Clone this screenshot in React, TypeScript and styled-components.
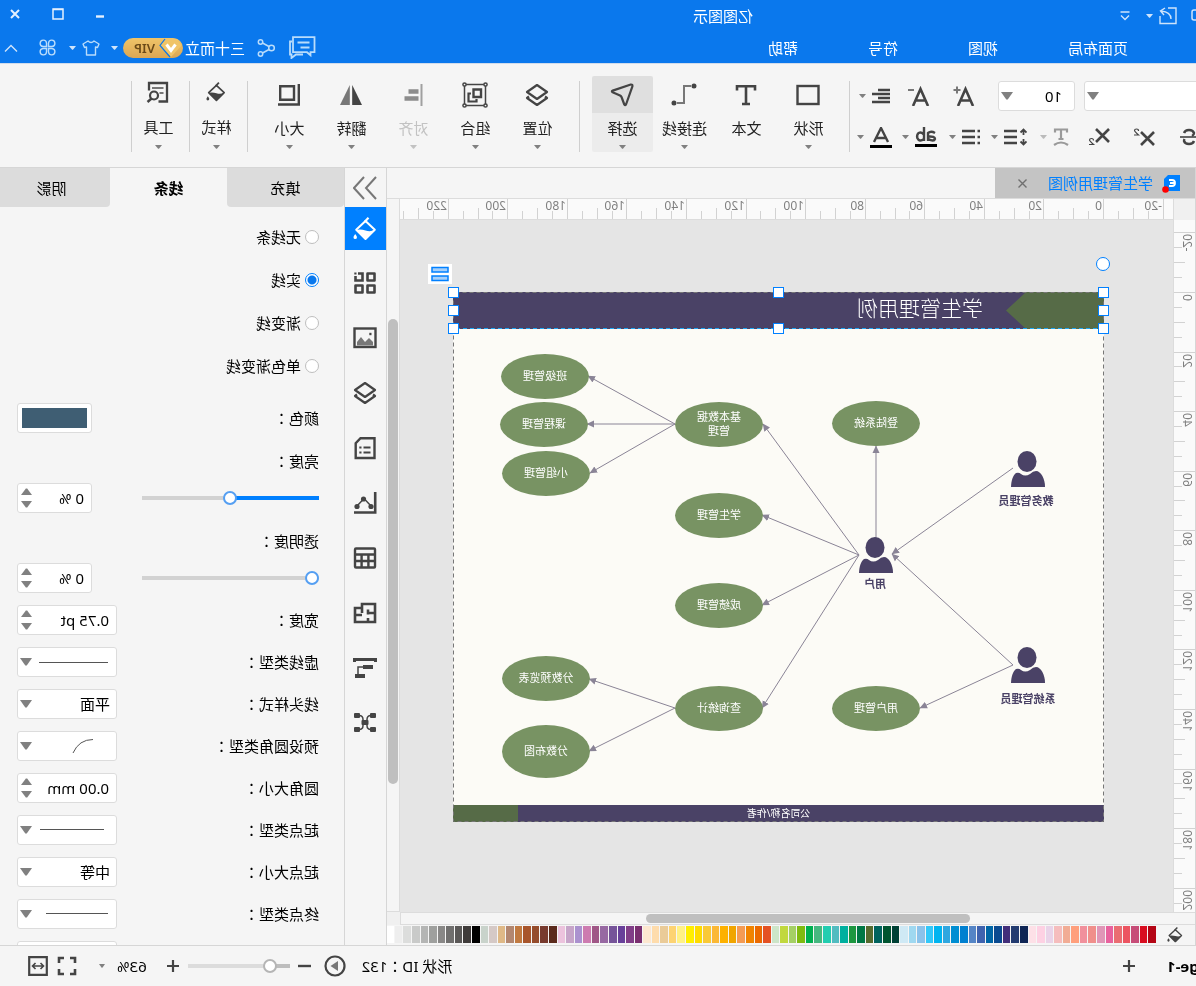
import React, { useState } from "react";
import styled, { createGlobalStyle } from "styled-components";

const ink = "#444444";
const line = "#d6d6d6";
const blue = "#0080ff";
const violet = "#4a4266";
const moss = "#566b47";

const GlobalStyle = createGlobalStyle`
  * { box-sizing: border-box; }
  body {
    margin: 0;
    overflow: hidden;
    background: #f5f5f5;
    color: #000;
    font: 15px/20px "Noto Sans", "Noto Sans CJK SC", sans-serif;
  }
  button, input, select { font: inherit; color: inherit; }
  button { padding: 0; border: 0; background: none; }
  svg { display: block; flex: none; }
`;

/* The whole window is shown as in a mirror. */
const Window = styled.div`
  display: flex;
  flex-direction: column;
  height: 100vh;
  overflow: hidden;
  transform: scaleX(-1);
`;

/* ---------- title bar ---------- */

const Header = styled.header`
  flex: none;
  color: #fff;
  background: #0a78ed;
  border-bottom: 1px solid #d0dcec;
`;

const TitleRow = styled.div`
  display: grid;
  grid-template-columns: 443px 1fr auto;
  align-items: center;
  height: 32px;
`;

const QuickAccess = styled.div`
  display: flex;
  align-items: center;
`;

const HeaderButton = styled.button<{ $before?: number }>`
  display: flex;
  align-items: center;
  margin-left: ${(p) => p.$before ?? 0}px;
`;

const WindowButtons = styled.div`
  display: flex;
  align-items: center;
  gap: 31px;
  height: 28px;
  padding-right: 9px;
  align-self: start;
`;

const MenuRow = styled.div`
  display: flex;
  align-items: center;
  justify-content: space-between;
  height: 31px;
  padding: 0 4px 0 68px;
`;

const Menu = styled.nav`
  display: flex;
  gap: 70px;
`;

const Account = styled.div`
  display: flex;
  align-items: center;
`;

const UserName = styled.span`
  margin: 0 2px 0 12px;
`;

const VipBadge = styled.span`
  display: flex;
  align-items: center;
  width: 60px;
  height: 20px;
  gap: 4px;
  border-radius: 10px;
  background: linear-gradient(#f0c468, #dba654);
  color: #6b4a17;
  font-size: 13px;
  font-weight: 600;
  line-height: 20px;
`;

/* ---------- ribbon ---------- */

const Ribbon = styled.section`
  display: flex;
  flex: none;
  height: 104px;
  padding-top: 12px;
  border-bottom: 1px solid ${line};
`;

const FontGroup = styled.div`
  flex: none;
  width: 346px;
  padding: 5px 2px 0 0;
`;

const FontRow = styled.div`
  display: flex;
  align-items: center;
  justify-content: flex-end;
  height: 30px;
  & + & { margin-top: 12px; height: 28px; }
`;

const Selectors = styled.div`
  display: flex;
  flex: none;
  gap: 9px;
  margin-right: 11px;
`;

const Slot = styled.button`
  display: flex;
  flex: none;
  align-items: center;
  justify-content: center;
  gap: 6px;
  width: 45px;
  height: 28px;
`;

const Divider = styled.span<{ $left?: number; $right?: number }>`
  flex: none;
  width: 1px;
  height: 71px;
  margin: 5px ${(p) => p.$right ?? 0}px 0 ${(p) => p.$left ?? 0}px;
  background: #cfcfcf;
`;

const Tools = styled.div`
  display: flex;
  gap: 1px;
`;

const Tool = styled.button<{ $active?: boolean; $low?: boolean }>`
  display: grid;
  grid-template-rows: ${(p) => (p.$low ? "32px 38px 2px 4px" : "37px 29px 10px")};
  justify-items: center;
  align-items: center;
  width: ${(p) => (p.$low ? 57 : 61)}px;
  height: 76px;
  padding-left: ${(p) => (p.$low ? 4 : 0)}px;
  border-radius: 2px;
  background: ${(p) =>
    p.$active ? "linear-gradient(#dfdfdf 37px, #ececec 37px)" : "none"};
  color: #222;
  white-space: nowrap;
  &:disabled { color: #c2c2c2; }
`;

/* ---------- form parts ---------- */

const Field = styled.span<{ $w?: number }>`
  position: relative;
  display: flex;
  flex: none;
  width: ${(p) => p.$w ?? 100}px;
  height: 30px;
  border: 1px solid #dcdcdc;
  border-radius: 3px;
  background: #fff;
`;

const NativeSelect = styled.select<{ $pad?: number }>`
  width: 100%;
  height: 100%;
  padding: 0 24px 0 ${(p) => p.$pad ?? 6}px;
  border: 0;
  background: none;
  appearance: none;
  outline: 0;
`;

const FieldMark = styled.span`
  position: absolute;
  top: 10px;
  right: 2px;
  pointer-events: none;
`;

const Preview = styled.svg`
  position: absolute;
  inset: 0;
  pointer-events: none;
`;

const SpinInput = styled.input`
  flex: 1;
  min-width: 0;
  padding: 0 0 0 7px;
  border: 0;
  background: none;
  outline: 0;
`;

const SpinButtons = styled.span`
  display: flex;
  flex-direction: column;
  justify-content: center;
  gap: 6px;
  padding-right: 3px;
`;

/* ---------- workspace ---------- */

const Body = styled.div`
  display: flex;
  flex: 1;
  min-height: 0;
`;

const Workspace = styled.main`
  display: grid;
  grid-template: 30px 22px 1fr 13px 20px / 22px 1fr 13px;
  flex: 1;
  min-width: 0;
  border-left: 1px solid ${line};
  border-right: 1px solid ${line};
`;

const DocTabs = styled.div`
  grid-column: 1 / -1;
  display: flex;
`;

const DocTab = styled.div`
  display: flex;
  align-items: center;
  width: 200px;
  padding-left: 15px;
  background: #c4c4c4;
  color: ${blue};
`;

const DocName = styled.span`
  margin: 0 21px 0 9px;
`;

const RulerCorner = styled.div`
  border: solid #dcdcdc;
  border-width: 1px 1px 0 0;
  background: #f0f0f0;
`;

const RulerTop = styled.div`
  position: relative;
  overflow: hidden;
  border: solid #dcdcdc;
  border-width: 1px 0;
  background: #fafafa;
`;

const RulerLeft = styled.div`
  position: relative;
  overflow: hidden;
  border-right: 1px solid #dcdcdc;
  background: #fafafa;
`;

const TickX = styled.i<{ $len: number }>`
  position: absolute;
  bottom: 0;
  width: 1px;
  height: ${(p) => p.$len}px;
  background: #d2d2d2;
`;

const TickY = styled.i<{ $len: number }>`
  position: absolute;
  right: 0;
  width: ${(p) => p.$len}px;
  height: 1px;
  background: #d2d2d2;
`;

const LabelX = styled.span`
  position: absolute;
  top: 0;
  color: #808080;
  font-size: 12px;
  line-height: 14px;
`;

const LabelY = styled.span`
  position: absolute;
  left: 1px;
  color: #808080;
  font-size: 12px;
  line-height: 14px;
  writing-mode: vertical-rl;
  transform: rotate(180deg);
`;

const ScrollY = styled.div`
  grid-row: 2 / 4;
  grid-column: 3;
  padding: 120px 1px 127px;
  border: solid #dcdcdc;
  border-width: 1px 0 1px 1px;
`;

const ThumbY = styled.div`
  height: 100%;
  border-radius: 5px;
  background: #bfbfbf;
`;

const ScrollX = styled.div`
  grid-row: 4;
  grid-column: 1 / 3;
  padding: 1px 1px 1px 225px;
  border: solid #dcdcdc;
  border-width: 1px 1px 1px 0;
`;

const ThumbX = styled.div`
  width: 57%;
  height: 9px;
  border-radius: 5px;
  background: #bfbfbf;
`;

const ScrollCorner = styled.div`
  background: #f0f0f0;
`;

const Palette = styled.div`
  grid-column: 1 / -1;
  display: flex;
  overflow: hidden;
  padding: 1px 0 2px 12px;
`;

const Swatches = styled.div`
  display: flex;
  flex: 1;
  margin: 0 -2px 0 11px;
`;

const Swatch = styled.button<{ $c: string }>`
  flex: 1;
  margin-right: 1px;
  background: ${(p) => p.$c};
`;

/* ---------- diagram ---------- */

const Stage = styled.div`
  position: relative;
  overflow: hidden;
  background: #e5e5e5;
`;

const Page = styled.div`
  position: absolute;
  left: 69px;
  top: 72px;
  width: 651px;
  height: 530px;
  background: #fcfbf6;
`;

const Drawing = styled.svg`
  position: absolute;
  inset: 0;
  overflow: visible;
`;

const Bubble = styled.div<{ $x: number; $y: number; $h?: number }>`
  position: absolute;
  left: ${(p) => p.$x - 44}px;
  top: ${(p) => p.$y - Math.floor((p.$h ?? 45) / 2)}px;
  display: flex;
  align-items: center;
  justify-content: center;
  width: 88px;
  height: ${(p) => p.$h ?? 45}px;
  padding-bottom: 2px;
  border-radius: 50%;
  background: #789363;
  color: #fff;
  font-size: 11px;
  line-height: 14px;
  text-align: center;
  white-space: pre-line;
`;

const ActorLabel = styled.div<{ $x: number; $y: number }>`
  position: absolute;
  left: ${(p) => p.$x - 40}px;
  top: ${(p) => p.$y - 8}px;
  width: 80px;
  color: ${violet};
  font-size: 11px;
  font-weight: 700;
  line-height: 16px;
  text-align: center;
`;

const Banner = styled.h1`
  position: absolute;
  left: 121px;
  top: 1px;
  margin: 0;
  color: #fff;
  font-size: 21px;
  font-weight: 300;
  line-height: 30px;
`;

const Footnote = styled.div`
  position: absolute;
  left: 0;
  right: 0;
  bottom: 1px;
  color: #fff;
  font-size: 10px;
  line-height: 16px;
  text-align: center;
`;

const Handle = styled.i<{ $x: number; $y: number }>`
  position: absolute;
  left: ${(p) => p.$x - 5}px;
  top: ${(p) => p.$y - 5}px;
  width: 11px;
  height: 11px;
  border: 1px solid ${blue};
  background: #fff;
`;

const RotateHandle = styled(Handle)`
  width: 14px;
  height: 14px;
  border-radius: 50%;
`;

const FloatButton = styled.button`
  position: absolute;
  left: 652px;
  top: -28px;
  display: flex;
  align-items: center;
  justify-content: center;
  width: 24px;
  height: 20px;
  background: #fff;
`;

/* ---------- side panel ---------- */

const IconBar = styled.nav`
  display: flex;
  flex: none;
  flex-direction: column;
  width: 41px;
`;

const BarGroup = styled.div`
  display: flex;
  flex-direction: column;
  padding-top: 5px;
`;

const BarButton = styled.button<{ $active?: boolean; $h?: number }>`
  display: flex;
  flex: none;
  align-items: center;
  justify-content: center;
  height: ${(p) => p.$h ?? 55}px;
  background: ${(p) => (p.$active ? blue : "none")};
  color: ${(p) => (p.$active ? "#fff" : ink)};
`;

const Panel = styled.aside`
  flex: none;
  width: 345px;
  overflow: hidden;
  border-left: 1px solid ${line};
`;

const Tabs = styled.div`
  display: flex;
  height: 39px;
`;

const Tab = styled.button<{ $active?: boolean }>`
  flex: none;
  width: 117px;
  border-radius: 0 0 4px 4px;
  background: ${(p) => (p.$active ? "none" : "#dcdcdc")};
  font-weight: ${(p) => (p.$active ? 700 : 400)};
`;

const Form = styled.form`
  padding: 8px 17px 0 25px;
`;

const RadioRow = styled.label`
  display: flex;
  align-items: center;
  gap: 4px;
  height: 43px;
`;

const Radio = styled.input`
  width: 14px;
  height: 14px;
  margin: 0;
  border: 1px solid #bdbdbd;
  border-radius: 50%;
  background: #fff;
  appearance: none;
  &:checked {
    border-color: ${blue};
    background: radial-gradient(circle, #0a78ed 4px, #fff 5px);
  }
`;

const Row = styled.div<{ $h?: number; $before?: number }>`
  display: flex;
  align-items: center;
  justify-content: space-between;
  height: ${(p) => p.$h ?? 42}px;
  margin-top: ${(p) => p.$before ?? 0}px;
`;

/* This face centres the full-width colon in its cell. */
const Colon = styled.span`
  font-family: "Noto Sans CJK TC", sans-serif;
  line-height: 1;
`;

const ColorButton = styled.button`
  width: 75px;
  height: 30px;
  padding: 4px;
  border: 1px solid #dcdcdc;
  border-radius: 3px;
  background: #3f5e73 content-box;
  box-shadow: inset 0 0 0 4px #fff;
`;

const Range = styled.input<{ $fill: number; $on: string; $off: string }>`
  flex: 1;
  min-width: 0;
  height: 14px;
  margin: 0 50px 0 0;
  border-radius: 2px;
  background: linear-gradient(90deg, ${(p) => p.$on} ${(p) => p.$fill}%, ${(p) => p.$off} ${(p) => p.$fill}%)
    center / 100% 4px no-repeat;
  appearance: none;
  &::-webkit-slider-thumb {
    width: 14px;
    height: 14px;
    border: 2px solid #559ff2;
    border-radius: 50%;
    background: #fff;
    appearance: none;
  }
`;

/* ---------- status bar ---------- */

const StatusBar = styled.footer`
  display: flex;
  flex: none;
  align-items: center;
  justify-content: space-between;
  height: 41px;
  padding-right: 28px;
  border-top: 1px solid ${line};
`;

const StatusGroup = styled.div`
  display: flex;
  align-items: center;
`;

const PageName = styled.button`
  width: 29px;
  margin-right: 32px;
  overflow: hidden;
  direction: rtl;
  font-weight: 700;
  white-space: nowrap;
`;

const StatusButton = styled.button<{ $before?: number }>`
  margin-left: ${(p) => p.$before ?? 0}px;
`;

const ZoomRange = styled(Range)`
  flex: none;
  width: 102px;
  margin: 0 9px 0 8px;
  &::-webkit-slider-thumb { border-color: #b5b5b5; }
`;

const ZoomValue = styled.span`
  margin: 0 12px 0 20px;
`;

/* ---------- icons ---------- */

type IconProps = { w?: number; h?: number; vb?: string; sw?: number; color?: string; children: React.ReactNode };
const Icon = ({ w = 24, h = 24, vb, sw = 2, color = ink, children }: IconProps) => (
  <svg width={w} height={h} viewBox={vb ?? `0 0 ${w} ${h}`} fill="none" stroke={color} strokeWidth={sw} aria-hidden="true">
    {children}
  </svg>
);

const Caret = ({ w = 7, h = 4, color = "#808080", up = false }: { w?: number; h?: number; color?: string; up?: boolean }) => (
  <svg width={w} height={h} viewBox="0 0 10 6" preserveAspectRatio="none" fill={color} aria-hidden="true">
    <path d={up ? "M0 6h10L5.600 .4h-1.200z" : "M0 0h10L5.600 5.600h-1.200z"} />
  </svg>
);

const LayersIcon = () => (
  <Icon sw={2.2}><path d="M12 2 22 9 12 16 2 9Z" strokeLinejoin="round" /><path d="M4 13.500 2 15l10 7 10-7-2-1.500" strokeLinejoin="round" /></Icon>
);

const BucketIcon = ({ color = ink, size = 24 }: { color?: string; size?: number }) => (
  <Icon w={size} h={size} vb="0 0 24 24" color={color}>
    <path d="M8.500 .8 12.500 5" strokeWidth="2.200" />
    <path d="M11.500 4 2.200 12.800 11.500 22 20.800 12.800Z" strokeWidth="2" strokeLinejoin="round" />
    <path d="M2.200 13q4.500 2 9.300.5t9.300-.5L11.500 22.500Z" fill={color} stroke="none" />
    <path d="M21.800 17c1.300 1.800 1.700 2.500 1.700 3.400a1.700 1.700 0 0 1-3.400 0c0-.9.400-1.600 1.700-3.400Z" fill={color} stroke="none" />
  </Icon>
);

const tools = {
  shape: <Icon sw={2.4}><rect x="1.500" y="3" width="21" height="18" /></Icon>,
  text: <Icon sw={2.6}><path d="M3 7.500V3.300h18v4.200M12 3v18M8 21h8" /></Icon>,
  connector: <Icon w={26}><path d="M6 3h7v17h7" stroke="#777" /><circle cx="3" cy="3" r="2.500" fill={ink} stroke="none" /><circle cx="23" cy="20" r="2.500" fill={ink} stroke="none" /></Icon>,
  select: <Icon sw={2.200}><path d="M3.200 1.500 21.300 7.600q1.600.7.100 1.700L14 12.500q-1 .6-1.500 1.500L9.700 21.500q-.8 1.500-1.700 0L1.600 3.300q-.3-2 1.600-1.800Z" strokeLinejoin="round" /></Icon>,
  group: (
    <Icon w={26} h={26} sw={1.500}>
      <rect x="2.500" y="2.500" width="21" height="21" />
      <g fill="#f5f5f5">{[2.500, 23.500].map((x) => [2.500, 23.500].map((y) => <circle key={`${x}${y}`} cx={x} cy={y} r="1.600" />))}</g>
      <path d="M7 7.500h7.500v7.500H7z" strokeWidth="2.400" />
      <path d="M17 11.500h2.500v8h-8V17" strokeWidth="2.200" />
    </Icon>
  ),
  align: <Icon w={20} color="#a0a0a0"><path d="M1.500 1v22" /><path d="M4.500 8.500h10M4.500 15.500h14" stroke="#8c8c8c" strokeWidth="4.500" /></Icon>,
  flip: <Icon><path d="M1 22h9.800V2z" fill={ink} stroke="none" /><path d="M23 22h-9.800V2z" fill="#777" stroke="none" /></Icon>,
  size: <Icon sw={2.400}><path d="M7 3.200h13.800v13.600H7zM2.200 1v20.500H23" /></Icon>,
  utility: (
    <Icon>
      <path d="M11.500 21.500H3V3h18v7.500" strokeWidth="2.300" /><path d="M6.500 8h11.500M6.500 13h4" stroke="#777" />
      <circle cx="16" cy="15.500" r="4" strokeWidth="2.200" /><path d="m18.500 18.500 4 3.500" strokeWidth="2.400" />
    </Icon>
  ),
};

const barIcons: [string, React.ReactNode][] = [
  ["布局", <Icon key="g" sw={2.600}><path d="M2.500 2.500h7v7h-7zM2.500 14.500h7v7h-7zM14.500 14.500h7v7h-7z" strokeLinejoin="round" /><path d="M21.500 5v4.500h-7v-7h4.500" /><path d="M20.500 2.500h2.200" strokeWidth="2" /></Icon>],
  ["图片", <Icon key="i" sw={2.400}><rect x="1.500" y="2.500" width="21" height="18.500" /><path d="M4 19.500v-3.500l4-4 4 4 4-5 4 5v3.500z" fill="#777" stroke="none" /><path d="M5.500 8h2.200" /></Icon>],
  ["图层", <LayersIcon key="l" />],
  ["页面", <Icon key="p" sw={2.400}><path d="M2.500 2.200h14l4.800 5v14.800H2.500z" /><path d="M6.500 11.500h7M15.500 11.500h2.200M6.500 16.500h7M15.500 16.500h2.200" strokeWidth="2" /></Icon>],
  ["图表", <Icon key="c" sw={2.200}><path d="M1.800 1v20.500H23" strokeWidth="2.600" /><path d="m6 15 7-7.500 7 7.500" strokeWidth="1.500" /><g fill={ink} stroke="none"><circle cx="6" cy="15.500" r="2.600" /><circle cx="13.500" cy="8" r="2.600" /><circle cx="20" cy="15.500" r="2.600" /></g></Icon>],
  ["表格", <Icon key="t" sw={2.400}><rect x="2" y="2.500" width="20" height="19" rx="1" /><path d="M2 8.500h20M2 15h20M8.600 9v12M15.400 9v12" /></Icon>],
  ["平面图", <Icon key="f" sw={2.600}><path d="M2 3h13v4h7v14H2zM2 12h7M9 8.500v5M9 17v4M15 7v5M15 14h7" /></Icon>],
  ["甘特图", <Icon key="n" sw={2}><path d="M1.500 6V3.500h21V6" strokeWidth="3" /><path d="M4 11h10M12 20h10" strokeWidth="4" /><path d="M12 11h7v8" strokeWidth="1.500" /></Icon>],
  ["导图", <Icon key="m" sw={2}><g fill={ink} stroke="none"><rect x="1" y="2" width="6" height="5" rx="1" /><rect x="17" y="2" width="6" height="5" rx="1" /><rect x="1" y="16" width="6" height="5" rx="1" /><rect x="17" y="16" width="6" height="5" rx="1" /><rect x="8.500" y="9" width="7" height="5" rx="1" /></g><path d="M6 4.500q4 0 4 4v6q0 4-4 4M18 4.500q-4 0-4 4v6q0 4 4 4" strokeWidth="1.500" /></Icon>],
];

const A = "M2 20 9.500 3 17 20M5 14.500h9";

/* ---------- data ---------- */

const swatchColors = (
  "b40515 d90d20 c74d78 ec5461 ea6d72 e8629e e096b7 f08f8b f1909c ff9f7c f1ac95 f5bdbd e9d3e8 fdd1e3 fde0e7 " +
  "0f2555 233b70 422e7a 0a4a90 0066a6 3f63af 5585c6 0080d0 008ed2 2fa7e0 00b4f0 33c8f9 8bc2ea 9fd8f0 cfe9f5 " +
  "004135 005530 00635e 566b2f 007845 1d9740 00b09f 52bcc0 22cdb0 46b880 00b050 80bb10 a5d065 c1d83e cce5c8 " +
  "e45123 eb6a00 f08400 f49b54 f0a500 fdb100 fbb835 f9c936 fedb00 ffee00 fff185 fdd372 eacb98 fedcac fde8d0 " +
  "7a2f70 813e88 68409a 765499 9768a2 a05786 cd7bb0 ab92cf c7a5c9 ecc3dd " +
  "5b2a1c 783a2e 954c2c a8552b c17a41 b38770 dfb987 d5c9c6 c9d3cb " +
  "000000 3f3b3a 5a5857 706f6e 898887 9fa09e b4b5b4 c9cac9 dcdddc eeeeee ffffff"
).split(" ");

const bubbles: [string, number, number, number?][] = [
  ["班级管理", 559, 84], ["课程管理", 560, 132], ["小组管理", 558, 181],
  ["基本数据\n管理", 385, 132], ["登陆系统", 228, 131], ["学生管理", 385, 223],
  ["成绩管理", 385, 313], ["查询统计", 385, 416], ["用户管理", 228, 416],
  ["分数预览表", 558, 386], ["分数布图", 558, 459, 53],
];

const links = [
  [91, 176, 212, 262], [91, 373, 212, 262], [91, 373, 184, 416], [228, 246, 228, 154],
  [245, 263, 341, 132], [245, 263, 342, 223], [245, 263, 342, 313], [245, 263, 342, 416],
  [429, 132, 516, 84], [429, 132, 517, 132], [429, 132, 514, 181],
  [429, 416, 515, 387], [429, 416, 515, 459],
];

const actors: [string, number, number, number, number][] = [
  ["教务管理员", 59, 159, 78, 209], ["用户", 211, 245, 229, 292], ["系统管理员", 59, 355, 76, 407],
];

const handles = [[0, 0], [325, 0], [650, 0], [0, 18], [650, 18], [0, 36], [325, 36], [650, 36]];

const tickLength = (i: number, full: number) => (i % 4 === 0 ? full : i % 2 === 0 ? 11 : 8);
const UNIT = 59.57;

const Rulers = {
  Top: () => (
    <RulerTop>
      {Array.from({ length: 52 }, (_, k) => k - 4).map((i) => {
        const at = Math.round(69 + (i * UNIT) / 4);
        return (
          <React.Fragment key={i}>
            <TickX $len={tickLength(i, 20)} style={{ left: at }} />
            {i % 4 === 0 && <LabelX style={{ left: at + 2 }}>{i * 5}</LabelX>}
          </React.Fragment>
        );
      })}
    </RulerTop>
  ),
  Left: () => (
    <RulerLeft>
      {Array.from({ length: 48 }, (_, k) => k - 4).map((i) => {
        const at = Math.round(72 + (i * UNIT) / 4);
        return (
          <React.Fragment key={i}>
            <TickY $len={tickLength(i, 22)} style={{ top: at }} />
            {i % 4 === 0 && <LabelY style={{ top: at + 2 }}>{i * 5}</LabelY>}
          </React.Fragment>
        );
      })}
    </RulerLeft>
  ),
};

function Spinner({ label, value, w }: { label: string; value: string; w?: number }) {
  return (
    <Field $w={w}>
      <SpinInput aria-label={label} defaultValue={value} />
      <SpinButtons>
        <button type="button" aria-label={`${label} +`}><Caret w={11} h={7} up /></button>
        <button type="button" aria-label={`${label} -`}><Caret w={11} h={7} /></button>
      </SpinButtons>
    </Field>
  );
}

function Dropdown({ label, value = "", preview, w, pad }: { label: string; value?: string; preview?: string; w?: number; pad?: number }) {
  return (
    <Field $w={w}>
      <NativeSelect aria-label={label} $pad={pad}><option>{value}</option></NativeSelect>
      {preview && <Preview width="80" height="28" fill="none" stroke="#555"><path d={preview} /></Preview>}
      <FieldMark><Caret w={12} h={8} /></FieldMark>
    </Field>
  );
}

const Caption = ({ children }: { children: string }) => <span>{children}<Colon lang="zh-TW">：</Colon></span>;

function Diagram() {
  return (
    <Stage>
      <Page>
        <Drawing width="651" height="530">
          <defs>
            <marker id="tip" markerUnits="userSpaceOnUse" markerWidth="8" markerHeight="8" refX="7" refY="4" orient="auto">
              <path d="M0 .5 7.500 4 0 7.500Z" fill="#8a8496" />
            </marker>
          </defs>
          <path d="M0 0h651v37H0zM0 513h586v17H0z" fill={violet} />
          <path d="M0 0h78l20 18.500L78 37H0zM586 513h65v17h-65z" fill={moss} />
          {links.map((l) => (
            <line key={l.join()} x1={l[0]} y1={l[1]} x2={l[2]} y2={l[3]} stroke="#8a8496" markerEnd="url(#tip)" />
          ))}
          {actors.map(([name, x, y]) => (
            <g key={name} transform={`translate(${x} ${y})`} fill={violet}>
              <ellipse cx="18" cy="10.500" rx="9.500" ry="10.500" />
              <path d="M0 36C0 28 4 20 9 20q3 0 6 3 5 3 9 0 2-2 5-1c3 2 5 8 5 14Z" />
            </g>
          ))}
          <path d="M.5.500h650v529H.5z" fill="none" stroke="#777" strokeDasharray="4 3" />
          <path d="M0 36.500h651" stroke="#1ea7f5" strokeDasharray="4 3" />
        </Drawing>
        <Banner>学生管理用例</Banner>
        {bubbles.map(([name, x, y, h]) => <Bubble key={name} $x={x} $y={y} $h={h}>{name}</Bubble>)}
        {actors.map(([name, , , x, y]) => <ActorLabel key={name} $x={x} $y={y}>{name}</ActorLabel>)}
        <Footnote>公司名称/作者</Footnote>
        {handles.map(([x, y]) => <Handle key={`${x}-${y}`} $x={x} $y={y} />)}
        <RotateHandle $x={-1} $y={-30} />
        <FloatButton aria-label="排列">
          <Icon w={18} h={16} sw={1.500} color={blue}><rect x="1" y="1.500" width="16" height="4.500" fill="#a6d0fb" /><rect x="1" y="10" width="16" height="4.500" fill="#a6d0fb" /></Icon>
        </FloatButton>
      </Page>
    </Stage>
  );
}

const strokes = ["无线条", "实线", "渐变线", "单色渐变线"];

export default function App() {
  const [stroke, setStroke] = useState("实线");
  const [bright, setBright] = useState(50);
  const [clear, setClear] = useState(0);
  const [zoom, setZoom] = useState(14);
  const pale = "#cfe4fb";
  const sky = "#b9dcfb";
  return (
    <>
      <GlobalStyle />
      <Window lang="zh-CN">
        <Header>
          <TitleRow>
            <QuickAccess>
              <HeaderButton aria-label="复制"><Icon w={5} h={16} sw={1.500} color={pale}><path d="M0 2h2q2 0 2 2v6q0 2-2 2H0" /></Icon></HeaderButton>
              <HeaderButton $before={14} aria-label="导出">
                <Icon w={18} h={18} sw={1.400} color={pale}><path d="M9 1H1v15.500h16V9M6 12q0-7 10-8M12 1l4.500 3L13 8" /></Icon>
              </HeaderButton>
              <HeaderButton $before={6} aria-label="更多"><Caret w={7} color={pale} /></HeaderButton>
              <HeaderButton $before={16} aria-label="自定义"><Icon w={10} h={10} sw={1.400} color={pale}><path d="M.5 1h9M1 4.500l4 4 4-4" /></Icon></HeaderButton>
            </QuickAccess>
            <span>亿图图示</span>
            <WindowButtons>
              <button aria-label="最小化"><Icon w={10} h={10} sw={2.400} color="#e4f0fe"><path d="M1 7.500h8" /></Icon></button>
              <button aria-label="最大化"><Icon w={12} h={12} sw={1.500} color="#e4f0fe"><path d="M1 1h10v10H1z" /><path d="M1 1.500h10" /></Icon></button>
              <button aria-label="关闭"><Icon w={12} h={10} sw={2} color="#e4f0fe"><path d="m2 1 8 8M10 1 2 9" /></Icon></button>
            </WindowButtons>
          </TitleRow>
          <MenuRow>
            <Menu>{["页面布局", "视图", "符号", "帮助"].map((m) => <button key={m}>{m}</button>)}</Menu>
            <Account>
              <button aria-label="消息"><Icon w={27} h={23} sw={1.800} color={sky}><path d="M1.500 1.200h21.500v15H9l-3.500 3v-3h-4zM6.500 6.500h12M6.500 11.500h9" /><path d="M24 5.500h2v13h-1.500v3.500l-4.500-3.500h-7" /></Icon></button>
              <HeaderButton $before={14} aria-label="分享"><Icon w={18} h={18} sw={1.500} color={sky}><circle cx="3.500" cy="9" r="2.800" /><circle cx="14.500" cy="3" r="2.200" /><circle cx="14.500" cy="15" r="2.200" /><path d="m6 7.500 6.500-3.500M6 10.500l6.500 3.500" /></Icon></HeaderButton>
              <UserName>三十而立</UserName>
              <VipBadge>
                <Icon w={24} h={20} sw={1.200} color="#0a78ed"><path d="M6 1h12l4.500 6.500L12 19 1.500 7.500z" fill="#f0c468" stroke="none" /><path d="M18 1l5 6.500L13 19" /><path d="m7.500 6.500 4.500 6 4.500-6" stroke="#fff" strokeWidth="3" /></Icon>
                VIP
              </VipBadge>
              <HeaderButton $before={5} aria-label="账户"><Caret color={pale} /></HeaderButton>
              <HeaderButton $before={11} aria-label="皮肤">
                <Icon w={18} h={16} sw={1.400} color={sky}><path d="M6 1 1 4l1.500 3.500L4.500 7v8h9V7l2 .5L17 4l-5-3q-3 3-6 0Z" strokeLinejoin="round" /></Icon>
              </HeaderButton>
              <HeaderButton $before={6} aria-label="选择皮肤"><Caret color={pale} /></HeaderButton>
              <HeaderButton $before={13} aria-label="应用">
                <Icon w={17} h={17} sw={1.400} color={sky}><path d="M7.500 7.500H4A3.200 3.200 0 1 1 7.500 4zM9.500 7.500V4A3.200 3.200 0 1 1 13 7.500zM7.500 9.500V13A3.200 3.200 0 1 1 4 9.500zM9.500 9.500H13A3.200 3.200 0 1 1 9.500 13z" /></Icon>
              </HeaderButton>
              <HeaderButton $before={21} aria-label="收起"><Icon w={14} h={8} sw={1.400} color={pale}><path d="m1 7.500 6-6 6 6" /></Icon></HeaderButton>
            </Account>
          </MenuRow>
        </Header>

        <Ribbon>
          <FontGroup>
            <FontRow>
              <Selectors>
                <Dropdown label="字体" w={124} />
                <Dropdown label="字号" value="10" w={77} pad={12} />
              </Selectors>
              <Slot aria-label="增大字号"><Icon w={22} h={20} sw={2.600}><path d={A} /><path d="M14.500 4h7M18 .5v7" strokeWidth="2" stroke="#777" /></Icon></Slot>
              <Slot aria-label="减小字号"><Icon w={22} h={20} sw={2.600}><path d={A} /><path d="M16 4h6" strokeWidth="2" stroke="#777" /></Icon></Slot>
              <Slot aria-label="对齐"><Icon w={18} h={16} sw={2.400}><path d="M0 2h12M0 6h18M0 10h12M0 14h18" /></Icon><Caret /></Slot>
            </FontRow>
            <FontRow>
              <Slot aria-label="删除线"><Icon w={18} h={18} sw={2.400}><path d="M14 5q-1-3-5-3T4 5q0 2 2 3M4 13q1 3 5 3t5-3q0-1-.5-2" /><path d="M0 9h18" strokeWidth="1.600" /></Icon></Slot>
              <Slot aria-label="上标"><Icon w={22} h={18} sw={2.600}><path d="m1 4 13 13M14 4 1 17" /><path d="M16.500 3q0-2 2-2t2 1.600q0 1-4 4.400h4.500" strokeWidth="1.200" /></Icon></Slot>
              <Slot aria-label="下标"><Icon w={22} h={18} sw={2.600}><path d="m1 1 13 13M14 1 1 14" /><path d="M16.500 12.500q0-2 2-2t2 1.600q0 1-4 4.400h4.500" strokeWidth="1.200" /></Icon></Slot>
              <Slot aria-label="文字方向"><Icon w={16} h={18} sw={2.200} color="#9a9a9a"><path d="M2 4.500V1.500h12v3M8 1.500V11M5.500 11h5M1 17q7-5 14 0" /></Icon><Caret color="#bbb" /></Slot>
              <Slot aria-label="行距"><Icon w={23} h={18} sw={2.400}><path d="M10 3h13M10 9h13M10 15h13" /><path d="M3.500 2v5M3.500 11v5M.5 4.500l3-3 3 3M.5 13.500l3 3 3-3" strokeWidth="1.800" /></Icon><Caret /></Slot>
              <Slot aria-label="项目符号"><Icon w={18} h={16} sw={2.400}><path d="M5 2h13M5 8h13M5 14h13M0 2h2.500M0 8h2.500M0 14h2.500" /></Icon><Caret /></Slot>
              <Slot aria-label="突出显示"><Icon w={22} h={20} sw={2.400}><path d="M2 6q4-2.500 7 0v8M9 9.500q-7-.5-7 2.400 1 3.300 7 0M13 0v14M13 8q2-3.500 5.500-2 2 2 1.200 5-2 4.500-6.700 1" /><path d="M0 18.500h22" stroke="#000" strokeWidth="3" /></Icon><Caret /></Slot>
              <Slot aria-label="字体颜色"><Icon w={22} h={21} sw={2.400}><path d="M4 15 11 1l7 14M6.500 11h9" /><path d="M0 19.500h22" stroke="#000" strokeWidth="3" /></Icon><Caret /></Slot>
            </FontRow>
          </FontGroup>
          <Divider $right={10} />
          <Tools>
            <Tool>{tools.shape}形状<Caret /></Tool>
            <Tool>{tools.text}文本</Tool>
            <Tool>{tools.connector}连接线<Caret /></Tool>
            <Tool $active>{tools.select}选择<Caret /></Tool>
          </Tools>
          <Divider $left={12} $right={11} />
          <Tools>
            <Tool><LayersIcon />位置<Caret /></Tool>
            <Tool>{tools.group}组合<Caret /></Tool>
            <Tool disabled>{tools.align}对齐<Caret color="#c2c2c2" /></Tool>
            <Tool>{tools.flip}翻转<Caret /></Tool>
            <Tool>{tools.size}大小<Caret /></Tool>
          </Tools>
          <Divider $left={11} />
          <Tool $low><BucketIcon size={20} />样式<Caret /></Tool>
          <Divider />
          <Tool $low>{tools.utility}工具<Caret /></Tool>
          <Divider />
        </Ribbon>

        <Body>
          <Workspace>
            <DocTabs>
              <DocTab>
                <Icon w={18} h={20} color={blue}>
                  <path d="M0 2h12l4 4v12H0z" fill={blue} stroke="none" /><path d="M11 7H8q-3 0-3 3t3 3h3M5 10h5" stroke="#fff" strokeWidth="1.800" /><circle cx="14.500" cy="16.500" r="3.300" fill="red" stroke="none" />
                </Icon>
                <DocName>学生管理用例图</DocName>
                <button aria-label="关闭文档"><Icon w={9} h={9} sw={1.400} color="#707070"><path d="m.5.500 8 8M8.500.5l-8 8" /></Icon></button>
              </DocTab>
            </DocTabs>
            <RulerCorner />
            <Rulers.Top />
            <ScrollY><ThumbY /></ScrollY>
            <Rulers.Left />
            <Diagram />
            <ScrollX><ThumbX /></ScrollX>
            <ScrollCorner />
            <Palette>
              <button aria-label="填充颜色"><BucketIcon size={16} /></button>
              <Swatches>{swatchColors.map((c) => <Swatch key={c} $c={`#${c}`} aria-label={`#${c}`} />)}</Swatches>
            </Palette>
          </Workspace>

          <IconBar>
            <BarButton $h={39} aria-label="收起面板"><Icon color="#777" sw={2}><path d="m1 1 10 11L1 23M13 1l10 11-10 11" /></Icon></BarButton>
            <BarButton $h={43} $active aria-label="样式"><BucketIcon color="#fff" /></BarButton>
            <BarGroup>
              {barIcons.map(([name, icon]) => <BarButton key={name} aria-label={name}>{icon}</BarButton>)}
            </BarGroup>
          </IconBar>

          <Panel>
            <Tabs>
              <Tab>填充</Tab>
              <Tab $active>线条</Tab>
              <Tab>阴影</Tab>
            </Tabs>
            <Form>
              {strokes.map((s) => (
                <RadioRow key={s}>
                  <Radio type="radio" name="stroke" checked={stroke === s} onChange={() => setStroke(s)} />
                  {s}
                </RadioRow>
              ))}
              <Row $h={43} $before={9}><Caption>颜色</Caption><ColorButton type="button" aria-label="颜色" /></Row>
              <Row $h={43}><Caption>亮度</Caption></Row>
              <Row $h={30} $before={1}>
                <Range type="range" aria-label="亮度" value={bright} onChange={(e) => setBright(+e.target.value)} $fill={bright} $on={blue} $off="#d2d2d2" />
                <Spinner label="亮度值" value="0 %" w={75} />
              </Row>
              <Row $h={43} $before={6}><Caption>透明度</Caption></Row>
              <Row $h={30} $before={1}>
                <Range type="range" aria-label="透明度" value={clear} onChange={(e) => setClear(+e.target.value)} $fill={clear} $on={blue} $off="#d2d2d2" />
                <Spinner label="透明度值" value="0 %" w={75} />
              </Row>
              <Row $before={6}><Caption>宽度</Caption><Spinner label="宽度" value="0.75 pt" /></Row>
              <Row><Caption>虚线类型</Caption><Dropdown label="虚线类型" preview="M8 14.500h69" /></Row>
              <Row><Caption>线头样式</Caption><Dropdown label="线头样式" value="平面" /></Row>
              <Row><Caption>预设圆角类型</Caption><Dropdown label="预设圆角类型" preview="M23 7.500q14 0 20 13.500" /></Row>
              <Row><Caption>圆角大小</Caption><Spinner label="圆角大小" value="0.00 mm" /></Row>
              <Row><Caption>起点类型</Caption><Dropdown label="起点类型" preview="M12 13.500h64" /></Row>
              <Row><Caption>起点大小</Caption><Dropdown label="起点大小" value="中等" /></Row>
              <Row><Caption>终点类型</Caption><Dropdown label="终点类型" preview="M8 13.500h62" /></Row>
              <Row><span /><Dropdown label="终点大小" /></Row>
            </Form>
          </Panel>
        </Body>

        <StatusBar>
          <StatusGroup>
            <PageName>Page-1</PageName>
            <button aria-label="新建页"><Icon w={12} h={12} sw={2.200}><path d="M0 6h12M6 0v12" /></Icon></button>
          </StatusGroup>
          <StatusGroup>
            <span>形状 ID<Colon lang="zh-TW">：</Colon>132</span>
            <StatusButton $before={16} aria-label="演示"><Icon w={22} h={22} sw={2.200}><circle cx="11" cy="11" r="9.500" /><path d="M8 6v10l7.500-5z" fill="#777" stroke="none" /></Icon></StatusButton>
            <StatusButton $before={13} aria-label="缩小"><Icon w={13} h={12} sw={2.400}><path d="M0 6h13" /></Icon></StatusButton>
            <ZoomRange type="range" aria-label="缩放" value={zoom} onChange={(e) => setZoom(+e.target.value)} $fill={zoom} $on="#bdbdbd" $off="#dcdcdc" />
            <button aria-label="放大"><Icon w={12} h={12} sw={2.200}><path d="M0 6h12M6 0v12" /></Icon></button>
            <ZoomValue>63%</ZoomValue>
            <button aria-label="缩放比例"><Caret w={6} /></button>
            <StatusButton $before={22} aria-label="全屏"><Icon w={20} h={20} sw={2.600}><path d="M2 7V2h5M13 2h5v5M18 13v5h-5M7 18H2v-5" /></Icon></StatusButton>
            <StatusButton $before={9} aria-label="适应宽度"><Icon w={20} h={20} sw={2.200}><path d="M1.200 1.200h17.600v17.600H1.200z" /><path d="M5 10h10M7.500 7 4.500 10l3 3M12.500 7l3 3-3 3" strokeWidth="1.600" /></Icon></StatusButton>
          </StatusGroup>
        </StatusBar>
      </Window>
    </>
  );
}
